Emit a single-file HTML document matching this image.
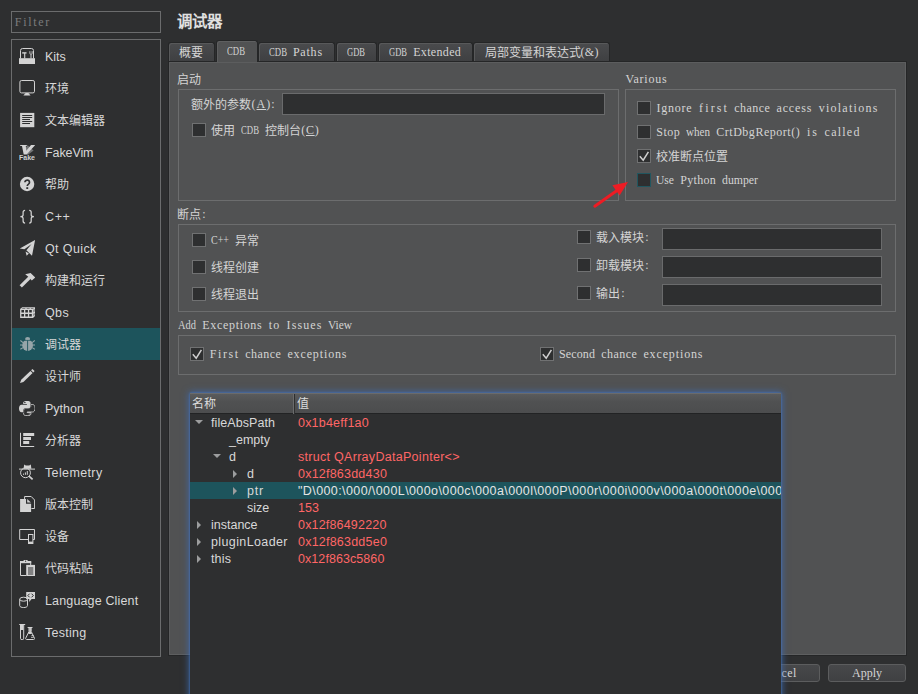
<!DOCTYPE html>
<html lang="zh-CN">
<head>
<meta charset="utf-8">
<title>Options</title>
<style>
*{box-sizing:border-box;margin:0;padding:0}
html,body{width:918px;height:694px;overflow:hidden;background:#2e2f30}
body{position:relative;font-family:"Liberation Sans",sans-serif;font-size:12px;color:#d4d4d4}
.abs{position:absolute}
.m{font-family:"Liberation Serif",serif;font-size:12px;white-space:pre}
.c{font-family:"Liberation Sans",sans-serif;font-size:12px;letter-spacing:0;position:relative;top:1px}
u{text-decoration:underline;text-underline-offset:1px}
#filter{left:11px;top:11px;width:150px;height:22px;border:1px solid #6b6c6d;background:#2e2f30}
#filter .lbl{left:2px;top:3px;color:#7b7c7d}
#list{left:11px;top:39px;width:150px;height:618px;border:1px solid #6b6c6d;background:#2e2f30}
.row{position:absolute;left:0;width:148px;height:32px}
.row.sel{background:#1d545c}
.row svg{position:absolute;left:7px;top:8px;width:16px;height:16px}
.row .t{position:absolute;left:33px;top:1px;line-height:32px;font-size:12.5px;white-space:nowrap;color:#d8d8d8}
.row .t.c{font-size:12px}
#title{left:177px;top:11px;font-size:15.4px;font-weight:bold;line-height:22px;color:#e0e0e0;white-space:nowrap}
.tab{position:absolute;top:42px;height:19px;border:1px solid #252627;border-bottom:none;background:linear-gradient(#4a4b4d,#3f4042);border-radius:3px 3px 0 0;white-space:nowrap;overflow:hidden;box-shadow:inset 1px 1px 0 #58595a}
.tab.on{top:40px;height:22px;background:#515253;z-index:3;box-shadow:inset 1px 1px 0 #5e5f60}
.tab .lbl{top:1.5px}
.tab.on .lbl{top:2.5px}
#pane{left:168px;top:61px;width:739px;height:595px;background:#515253;border:1px solid #252627;box-shadow:inset 1px 1px 0 #5c5d5e,inset -1px -1px 0 #5e5f60}
.gb{position:absolute;border:1px solid #6c6d6e}
.lbl{position:absolute;white-space:nowrap;line-height:14px;height:14px}
.inp{position:absolute;background:#2e2f30;border:1px solid #6a6b6c}
.cb{position:absolute;width:14px;height:14px;background:#2e2f30;border:1px solid #707172}
.cb svg{position:absolute;left:0;top:0;width:12px;height:12px}
.btn{position:absolute;height:18px;border:1px solid #5c5d5e;background:linear-gradient(#47484a,#3f4042);border-radius:3px}
#pop{left:190px;top:393px;width:591px;height:310px;background:#2e2f30;z-index:10;overflow:hidden}
#popglow{left:190px;top:393px;width:591px;height:310px;box-shadow:0 0 2px 0 rgba(70,120,196,.95),0 0 7px 1px rgba(62,110,182,.8);z-index:9}
#pop .hd{position:absolute;left:0;top:0;width:591px;height:21px;background:linear-gradient(#5a5b5c,#505152 40%,#4c4d4e);border-top:1px solid #6a6b6c;border-bottom:1px solid #222324}
#pop .hd span{position:absolute;line-height:14px;top:3px;color:#dcdcdc}
#pop .tr{position:absolute;left:0;width:591px;height:17px;line-height:17px;white-space:nowrap;font-size:12.5px}
#pop .tr.sel{background:#1d545c}
#pop .n{position:absolute;top:1px;color:#d8d8d8}
#pop .v{position:absolute;left:108px;top:1px;color:#ff6666}
#pop .tr.sel .v{color:#e4e4e4}
.ad{position:absolute;width:0;height:0;border-left:4px solid transparent;border-right:4px solid transparent;border-top:4.5px solid #9c9d9e;top:6px;box-sizing:content-box}
.ag{position:absolute;width:0;height:0;border-top:4px solid transparent;border-bottom:4px solid transparent;border-left:4.5px solid #9c9d9e;top:4.5px;box-sizing:content-box}
</style>
</head>
<body>
<div id="filter" class="abs"><div class="lbl"><span class="m"><span style="display:inline-block;width:36px;letter-spacing:1.667px;padding-left:0.833px">Filter</span></span></div></div>
<div id="list" class="abs">
<div class="row" style="top:0px"><svg viewBox="0 0 16 16"><path d="M1.5 10.5V2.6a2.1 2.1 0 0 1 2.1-2.1h8.8a2.1 2.1 0 0 1 2.1 2.1V10.5" fill="none" stroke="#d3d3d3" stroke-width="1"/><rect x="0" y="10.2" width="16" height="5.8" fill="#d3d3d3"/><path d="M3.2 4.9h4.3" fill="none" stroke="#d3d3d3" stroke-width="1.4"/><path d="M5.7 5v5.4" fill="none" stroke="#d3d3d3" stroke-width="1.1"/><path d="M12 6.6v3.8" fill="none" stroke="#d3d3d3" stroke-width="1"/><path d="M10.9 3.2v2.1a1.1 1.1 0 0 0 2.2 0V3.2" fill="none" stroke="#d3d3d3" stroke-width="0.9"/></svg><span class="t">Kits</span></div>
<div class="row" style="top:32px"><svg viewBox="0 0 16 16"><rect x="0.9" y="0.5" width="14.6" height="12.4" rx="1.6" fill="none" stroke="#d3d3d3" stroke-width="1"/><path d="M4.4 15.6 6.6 13.1h2.8l2.2 2.5z" fill="#d3d3d3"/></svg><span class="t c">环境</span></div>
<div class="row" style="top:64px"><svg viewBox="0 0 16 16"><rect x="1.1" y="0.9" width="14.2" height="14.3" fill="#d3d3d3"/><path d="M3.2 3.5h10M3.2 5.5h10M3.2 7.5h7.8M3.2 9.5h10M3.2 11.5h7.8" fill="none" stroke="#2e2f30" stroke-width="1"/></svg><span class="t c">文本编辑器</span></div>
<div class="row" style="top:96px"><svg viewBox="0 0 16 16"><path d="M8.6 1.2 14.6 6.6 8.6 11 4.6 6.6z" fill="#747576"/><path d="M1.2 1.1h6.6v1h-1l.5 4.6L12 1.1h4.1L7.6 10.6H4.7L3 2.1H1.2z" fill="#d3d3d3"/><text x="0" y="15.8" font-family="Liberation Sans" font-weight="bold" font-size="6.4" fill="#d3d3d3" textLength="16" lengthAdjust="spacingAndGlyphs">Fake</text></svg><span class="t" style="letter-spacing:-0.1px">FakeVim</span></div>
<div class="row" style="top:128px"><svg viewBox="0 0 16 16"><circle cx="8.1" cy="8" r="7.2" fill="#d3d3d3"/><path d="M5.9 6.3a2.3 2.2 0 1 1 3.6 1.8c-.9.6-1.2 1-1.2 2" fill="none" stroke="#2e2f30" stroke-width="1.7"/><rect x="7.3" y="11.2" width="1.9" height="1.8" fill="#2e2f30"/></svg><span class="t c">帮助</span></div>
<div class="row" style="top:160px"><svg viewBox="0 0 16 16"><path d="M6.1 2.3C4.6 2.3 4.1 3 4.1 4.3V6.9C4.1 8 3.4 8.5 1.4 8.6 3.4 8.7 4.1 9.2 4.1 10.4V13C4.1 14.3 4.6 15 6.1 15" fill="none" stroke="#d3d3d3" stroke-width="1.25"/><path d="M10.2 2.3C11.7 2.3 12.2 3 12.2 4.3V6.9C12.2 8 12.9 8.5 14.9 8.6 12.900 8.7 12.2 9.2 12.2 10.4V13C12.2 14.3 11.7 15 10.2 15" fill="none" stroke="#d3d3d3" stroke-width="1.25"/></svg><span class="t" style="letter-spacing:0.6px">C++</span></div>
<div class="row" style="top:192px"><svg viewBox="0 0 16 16"><path d="M16.1 0 0.8 8.6 5.4 9.3 12.6 4 7.4 10.2 13 15.8z" fill="#d3d3d3"/><path d="M6.6 11.4 7.6 15.8 9.9 13.5z" fill="#d3d3d3"/></svg><span class="t" style="letter-spacing:0.38px">Qt Quick</span></div>
<div class="row" style="top:224px"><svg viewBox="0 0 16 16"><path d="M0.6 13.3 2.9 15.600 12 6.500 9.700 4.200z" fill="#d3d3d3"/><path d="M6.2 2.3 11.6 0.9 16.3 5.6 12.8 8.6 9.3 4.7z" fill="#d3d3d3"/></svg><span class="t c">构建和运行</span></div>
<div class="row" style="top:256px"><svg viewBox="0 0 16 16"><path d="M1.1 4.9 3.2 3.2H16.1V11.8L14 13.9H1.1z" fill="#d3d3d3"/><path d="M2.4 6h2.6v2.6H2.4zM6.3 6h2.6v2.6H6.3zM10.2 6h2.6v2.6h-2.6zM2.4 9.9h2.6v2.6H2.4zM6.3 9.9h2.6v2.6H6.3zM10.2 9.9h2.6v2.6h-2.6z" fill="#2e2f30"/><path d="M2.6 4.4 3.7 3.9h3L6 4.4zM7.3 4.4 8 3.9h3l-.7.5zM11.5 4.4l.7-.5h2.6l-.7.5zM14.6 5.8l.8-.8v2.6l-.8.8zM14.6 9.7l.8-.8v2.4l-.8.8z" fill="#2e2f30"/></svg><span class="t" style="letter-spacing:0.4px">Qbs</span></div>
<div class="row sel" style="top:288px"><svg viewBox="0 0 16 16"><ellipse cx="8.6" cy="9.3" rx="5.4" ry="5.6" fill="#96a5a9"/><ellipse cx="8.6" cy="2.9" rx="2.5" ry="2" fill="#96a5a9"/><path d="M8.6 4.3V15" stroke="#1d545c" stroke-width="0.9"/><path d="M1.4 4.5 4 6.6M15.8 4.5 13.2 6.6M1 9h2.6M16.2 9h-2.6M1.4 13.3 4 11.6M15.8 13.3 13.2 11.6" fill="none" stroke="#96a5a9" stroke-width="1.1"/><path d="M5.6 4.4h6" stroke="#1d545c" stroke-width="0.7"/></svg><span class="t c">调试器</span></div>
<div class="row" style="top:320px"><svg viewBox="0 0 16 16"><path d="M1 15.1 2.2 11.8 11.4 2.9 13.6 5.1 4.4 14z" fill="#d3d3d3"/><path d="M12.1 2.2 13.4 0.9 15.6 3 14.3 4.4z" fill="#d3d3d3"/></svg><span class="t c">设计师</span></div>
<div class="row" style="top:352px"><svg viewBox="0 0 16 16"><path d="M11.90 13.70 C11.90 15.10 10.70 15.70 8.20 15.70 S4.60 15.10 4.60 13.70 V10.50 C4.60 9.30 5.40 8.50 6.60 8.50 H9.70 C10.90 8.50 11.70 7.70 11.70 6.50 V4.50 H13.50 C15.10 4.50 16.10 6.00 16.10 8.20 S15.10 12.00 13.50 12.00 H8.20 V12.60 H11.90 Z" fill="none" stroke="#d3d3d3" stroke-width="0.9"/><path d="M4.2 3C4.2 1.6 5.4 1 7.9 1S11.5 1.6 11.5 3V6.2C11.5 7.4 10.7 8.200 9.500 8.200H6.400C5.200 8.200 4.400 9 4.400 10.200V12.200H2.600C1 12.200 0 10.700 0 8.500S1 4.700 2.600 4.700H7.900V4.100H4.200Z" fill="#d3d3d3" stroke="#2e2f30" stroke-width="1.3" paint-order="stroke"/><circle cx="5.900" cy="2.600" r=".75" fill="#2e2f30"/><circle cx="10.200" cy="14.100" r=".5" fill="#d3d3d3"/></svg><span class="t">Python</span></div>
<div class="row" style="top:384px"><svg viewBox="0 0 16 16"><path d="M1.500 0.800V14.500H15.200" fill="none" stroke="#d3d3d3" stroke-width="1"/><rect x="4.200" y="1" width="11" height="3" fill="#d3d3d3"/><rect x="4.200" y="5" width="7.800" height="3" fill="#d3d3d3"/><rect x="4.200" y="9" width="6" height="3" fill="#d3d3d3"/></svg><span class="t c">分析器</span></div>
<div class="row" style="top:416px"><svg viewBox="0 0 16 16"><path d="M4.600 4.800 5.200 0.400 6.800 1.400H10.200L11.800 0.400 12.400 4.800z" fill="#d3d3d3"/><path d="M0 5.100H16" fill="none" stroke="#d3d3d3" stroke-width="1"/><circle cx="6.500" cy="8.800" r="4.900" fill="none" stroke="#d3d3d3" stroke-width="1" fill="#2e2f30"/><path d="M10 12.200 13.600 15.400" fill="none" stroke="#d3d3d3" stroke-width="1.7"/><path d="M4.500 10.800V9.600M6.400 10.800V8.400M8.300 10.800V7" fill="none" stroke="#d3d3d3" stroke-width="1"/></svg><span class="t" style="letter-spacing:0.37px">Telemetry</span></div>
<div class="row" style="top:448px"><svg viewBox="0 0 16 16"><path d="M5.6 3.4V0.5H12.2L15.6 4V12.500H12.4" fill="none" stroke="#d3d3d3" stroke-width="1"/><path d="M1.1 3.100H7V7.700H12.100V16H1.100z" fill="#d3d3d3"/><path d="M8.200 3V6.600H11.900z" fill="#d3d3d3"/></svg><span class="t c">版本控制</span></div>
<div class="row" style="top:480px"><svg viewBox="0 0 16 16"><path d="M9 11.500H0.700V1.500H15.500V6" fill="none" stroke="#d3d3d3" stroke-width="1"/><rect x="9.500" y="6.500" width="4.400" height="9" fill="none" stroke="#d3d3d3" stroke-width="1"/><rect x="9.500" y="13.600" width="4.400" height="2" fill="#d3d3d3"/><path d="M14 11.500h1.500V6" fill="none" stroke="#d3d3d3" stroke-width="1"/></svg><span class="t c">设备</span></div>
<div class="row" style="top:512px"><svg viewBox="0 0 16 16"><path d="M1.500 1.500H11.700V5M7 15.500H1.500V1.500" fill="none" stroke="#d3d3d3" stroke-width="1"/><rect x="1" y="1" width="11.200" height="2.200" fill="#d3d3d3"/><rect x="4.600" y="0" width="4" height="1.600" fill="#d3d3d3"/><circle cx="6.600" cy="1.200" r=".6" fill="#2e2f30"/><rect x="7.200" y="4.900" width="8.900" height="11.100" fill="#d3d3d3"/><path d="M9 8h5.300M9 10h5.300M9 12h5.300M9 14h5.300" stroke="#2e2f30" stroke-width="1" fill="none"/></svg><span class="t c">代码粘贴</span></div>
<div class="row" style="top:544px"><svg viewBox="0 0 16 16"><path d="M0.700 7.300V13.600C0.700 16.200 8.500 16.200 8.500 13.600V7.300" fill="none" stroke="#d3d3d3" stroke-width="1"/><ellipse cx="4.600" cy="7.200" rx="3.900" ry="2" fill="none" stroke="#d3d3d3" stroke-width="1"/><path d="M7.200 0H16V6.900H12.600L10.200 10V6.900H7.200z" fill="#d3d3d3"/><path d="M10.600 1.700 8.900 3.500 10.600 5.300M12.600 1.700 14.300 3.500 12.600 5.300" fill="none" stroke="#2e2f30" stroke-width="1"/></svg><span class="t" style="letter-spacing:0.15px">Language Client</span></div>
<div class="row" style="top:576px"><svg viewBox="0 0 16 16"><path d="M0.200 0.500H6.200" fill="none" stroke="#d3d3d3" stroke-width="1"/><path d="M1.500 1V14.200A1.600 1.600 0 0 0 4.700 14.200V1" fill="none" stroke="#d3d3d3" stroke-width="1"/><rect x="2" y="1" width="2.200" height="5" fill="#d3d3d3"/><path d="M8.600 3.500H13.500" fill="none" stroke="#d3d3d3" stroke-width="1"/><path d="M10 4V7.500L6.700 14.200C6.400 15 6.800 15.500 7.600 15.500H14.600C15.400 15.500 15.800 15 15.500 14.200L12.200 7.500V4" fill="none" stroke="#d3d3d3" stroke-width="1"/><path d="M10.300 4h1.600v3.600l1.100 2.300H9.200l1.100-2.300z" fill="#d3d3d3"/><path d="M12.500 11.500h2M12 13.300h2.800" fill="none" stroke="#d3d3d3" stroke-width="0.9"/></svg><span class="t" style="letter-spacing:0.28px">Testing</span></div>
</div>
<div id="title" class="abs">调试器</div>
<div id="pane" class="abs"></div>
<div class="tab" style="left:168px;width:47px"><div class="lbl" style="left:9.5px"><span class="c">概要</span></div></div>
<div class="tab on" style="left:216px;width:42px"><div class="lbl" style="left:9.5px"><span class="m"><span style="display:inline-block;width:18px"><span style="display:inline-block;transform:scaleX(0.7291);transform-origin:0 50%">CDB</span></span></span></div></div>
<div class="tab" style="left:258px;width:77px"><div class="lbl" style="left:9.5px"><span class="m"><span style="display:inline-block;width:18px"><span style="display:inline-block;transform:scaleX(0.7291);transform-origin:0 50%">CDB</span></span><span style="display:inline-block;width:6px"></span><span style="display:inline-block;width:30px;letter-spacing:0.797px;padding-left:0.398px">Paths</span></span></div></div>
<div class="tab" style="left:336px;width:41px"><div class="lbl" style="left:9.5px"><span class="m"><span style="display:inline-block;width:18px"><span style="display:inline-block;transform:scaleX(0.7102);transform-origin:0 50%">GDB</span></span></span></div></div>
<div class="tab" style="left:378px;width:95px"><div class="lbl" style="left:10px"><span class="m"><span style="display:inline-block;width:18px"><span style="display:inline-block;transform:scaleX(0.7102);transform-origin:0 50%">GDB</span></span><span style="display:inline-block;width:6px"></span><span style="display:inline-block;width:48px;letter-spacing:0.334px;padding-left:0.167px">Extended</span></span></div></div>
<div class="tab" style="left:473px;width:137px"><div class="lbl" style="left:10.5px"><span class="c">局部变量和表达式</span><span class="m"><span style="display:inline-block;width:18px;letter-spacing:0.224px;padding-left:0.112px">(&amp;)</span></span></div></div>
<div class="lbl" style="left:177px;top:72px;"><span class="c">启动</span></div>
<div class="gb" style="left:178px;top:89px;width:441px;height:112px"></div>
<div class="lbl" style="left:191px;top:97px;"><span class="c">额外的参数</span><span class="m"><span style="display:inline-block;width:24px;letter-spacing:1.000px;padding-left:0.500px">(<u>A</u>):</span></span></div>
<div class="inp" style="left:282px;top:93px;width:323px;height:22px"></div>
<div class="cb" style="left:192px;top:123px;"></div>
<div class="lbl" style="left:211px;top:123px;"><span class="c">使用</span><span class="m"><span style="display:inline-block;width:6px"></span><span style="display:inline-block;width:18px"><span style="display:inline-block;transform:scaleX(0.7291);transform-origin:0 50%">CDB</span></span><span style="display:inline-block;width:6px"></span></span><span class="c">控制台</span><span class="m"><span style="display:inline-block;width:18px;letter-spacing:0.667px;padding-left:0.333px">(<u>C</u>)</span></span></div>
<div class="lbl" style="left:625px;top:72px;"><span class="m"><span style="display:inline-block;width:42px;letter-spacing:0.761px;padding-left:0.381px">Various</span></span></div>
<div class="gb" style="left:625px;top:89px;width:271px;height:112px"></div>
<div class="cb" style="left:637px;top:101px;"></div>
<div class="lbl" style="left:656px;top:101px;"><span class="m"><span style="display:inline-block;width:36px;letter-spacing:0.779px;padding-left:0.389px">Ignore</span><span style="display:inline-block;width:6px"></span><span style="display:inline-block;width:30px;letter-spacing:2.131px;padding-left:1.066px">first</span><span style="display:inline-block;width:6px"></span><span style="display:inline-block;width:36px;letter-spacing:0.448px;padding-left:0.224px">chance</span><span style="display:inline-block;width:6px"></span><span style="display:inline-block;width:36px;letter-spacing:0.891px;padding-left:0.445px">access</span><span style="display:inline-block;width:6px"></span><span style="display:inline-block;width:60px;letter-spacing:1.266px;padding-left:0.633px">violations</span></span></div>
<div class="cb" style="left:637px;top:125px;"></div>
<div class="lbl" style="left:656px;top:125px;"><span class="m"><span style="display:inline-block;width:24px;letter-spacing:0.496px;padding-left:0.248px">Stop</span><span style="display:inline-block;width:6px"></span><span style="display:inline-block;width:24px"><span style="display:inline-block;transform:scaleX(0.9231);transform-origin:0 50%">when</span></span><span style="display:inline-block;width:6px"></span><span style="display:inline-block;width:84px;letter-spacing:0.525px;padding-left:0.262px">CrtDbgReport()</span><span style="display:inline-block;width:6px"></span><span style="display:inline-block;width:12px;letter-spacing:1.992px;padding-left:0.996px">is</span><span style="display:inline-block;width:6px"></span><span style="display:inline-block;width:36px;letter-spacing:1.224px;padding-left:0.612px">called</span></span></div>
<div class="cb" style="left:637px;top:149px;"><svg viewBox="0 0 12 12"><path d="M1.8 6.3 5.2 10.2 10.4 1.9" fill="none" stroke="#d0d0d0" stroke-width="1.5"/></svg></div>
<div class="lbl" style="left:656px;top:149px;"><span class="c">校准断点位置</span></div>
<div class="cb" style="left:637px;top:173px;border-color:#21565f;"></div>
<div class="lbl" style="left:656px;top:173px;"><span class="m"><span style="display:inline-block;width:18px"><span style="display:inline-block;transform:scaleX(0.9640);transform-origin:0 50%">Use</span></span><span style="display:inline-block;width:6px"></span><span style="display:inline-block;width:36px;letter-spacing:0.331px;padding-left:0.165px">Python</span><span style="display:inline-block;width:6px"></span><span style="display:inline-block;width:36px"><span style="display:inline-block;transform:scaleX(0.9821);transform-origin:0 50%">dumper</span></span></span></div>
<svg class="abs" style="left:585px;top:170px;width:60px;height:45px" viewBox="585 170 60 45"><path d="M594.8 206.2 617 190.5" stroke="#ed1c24" stroke-width="3" stroke-linecap="round" fill="none"/><path d="M628 182 612.4 185.3 619.6 195.6z" fill="#ed1c24"/></svg>
<div class="lbl" style="left:177px;top:207px;"><span class="c">断点</span><span class="m"><span style="display:inline-block;width:6px;letter-spacing:2.656px;padding-left:1.328px">:</span></span></div>
<div class="gb" style="left:178px;top:224px;width:718px;height:88px"></div>
<div class="cb" style="left:192px;top:233px;"></div>
<div class="lbl" style="left:211px;top:233px;"><span class="m"><span style="display:inline-block;width:18px"><span style="display:inline-block;transform:scaleX(0.8354);transform-origin:0 50%">C++</span></span><span style="display:inline-block;width:6px"></span></span><span class="c">异常</span></div>
<div class="cb" style="left:192px;top:260px;"></div>
<div class="lbl" style="left:211px;top:260px;"><span class="c">线程创建</span></div>
<div class="cb" style="left:192px;top:287px;"></div>
<div class="lbl" style="left:211px;top:287px;"><span class="c">线程退出</span></div>
<div class="cb" style="left:577px;top:230px;"></div>
<div class="lbl" style="left:596px;top:230px;"><span class="c">载入模块</span><span class="m"><span style="display:inline-block;width:6px;letter-spacing:2.656px;padding-left:1.328px">:</span></span></div>
<div class="inp" style="left:662px;top:228px;width:220px;height:22px"></div>
<div class="cb" style="left:577px;top:258px;"></div>
<div class="lbl" style="left:596px;top:258px;"><span class="c">卸载模块</span><span class="m"><span style="display:inline-block;width:6px;letter-spacing:2.656px;padding-left:1.328px">:</span></span></div>
<div class="inp" style="left:662px;top:256px;width:220px;height:22px"></div>
<div class="cb" style="left:577px;top:286px;"></div>
<div class="lbl" style="left:596px;top:286px;"><span class="c">输出</span><span class="m"><span style="display:inline-block;width:6px;letter-spacing:2.656px;padding-left:1.328px">:</span></span></div>
<div class="inp" style="left:662px;top:284px;width:220px;height:22px"></div>
<div class="lbl" style="left:178px;top:318px;"><span class="m"><span style="display:inline-block;width:18px"><span style="display:inline-block;transform:scaleX(0.8707);transform-origin:0 50%">Add</span></span><span style="display:inline-block;width:6px"></span><span style="display:inline-block;width:60px;letter-spacing:0.667px;padding-left:0.334px">Exceptions</span><span style="display:inline-block;width:6px"></span><span style="display:inline-block;width:12px;letter-spacing:1.328px;padding-left:0.664px">to</span><span style="display:inline-block;width:6px"></span><span style="display:inline-block;width:36px;letter-spacing:1.109px;padding-left:0.555px">Issues</span><span style="display:inline-block;width:6px"></span><span style="display:inline-block;width:24px"><span style="display:inline-block;transform:scaleX(0.9493);transform-origin:0 50%">View</span></span></span></div>
<div class="gb" style="left:178px;top:335px;width:718px;height:40px"></div>
<div class="cb" style="left:190px;top:347px;"><svg viewBox="0 0 12 12"><path d="M1.8 6.3 5.2 10.2 10.4 1.9" fill="none" stroke="#d0d0d0" stroke-width="1.5"/></svg></div>
<div class="lbl" style="left:209px;top:347px;"><span class="m"><span style="display:inline-block;width:30px;letter-spacing:1.597px;padding-left:0.798px">First</span><span style="display:inline-block;width:6px"></span><span style="display:inline-block;width:36px;letter-spacing:0.448px;padding-left:0.224px">chance</span><span style="display:inline-block;width:6px"></span><span style="display:inline-block;width:60px;letter-spacing:0.867px;padding-left:0.434px">exceptions</span></span></div>
<div class="cb" style="left:540px;top:347px;"><svg viewBox="0 0 12 12"><path d="M1.8 6.3 5.2 10.2 10.4 1.9" fill="none" stroke="#d0d0d0" stroke-width="1.5"/></svg></div>
<div class="lbl" style="left:559px;top:347px;"><span class="m"><span style="display:inline-block;width:36px;letter-spacing:0.112px;padding-left:0.056px">Second</span><span style="display:inline-block;width:6px"></span><span style="display:inline-block;width:36px;letter-spacing:0.448px;padding-left:0.224px">chance</span><span style="display:inline-block;width:6px"></span><span style="display:inline-block;width:60px;letter-spacing:0.867px;padding-left:0.434px">exceptions</span></span></div>
<div class="btn" style="left:744px;top:664px;width:76px"><div class="lbl" style="left:15.5px;top:1px"><span class="m"><span style="display:inline-block;width:36px;letter-spacing:0.445px;padding-left:0.223px">Cancel</span></span></div></div>
<div class="btn" style="left:828px;top:664px;width:78px"><div class="lbl" style="left:23px;top:1px"><span class="m"><span style="display:inline-block;width:30px;letter-spacing:0.000px;padding-left:0.000px">Apply</span></span></div></div>
<div id="popglow" class="abs"></div>
<div id="pop" class="abs">
<div class="hd"><span style="left:2px">名称</span><span style="left:107px">值</span><span style="left:103px;top:0;width:1px;height:20px;background:#6a6b6c"></span><span style="left:104px;top:0;width:1px;height:20px;background:#2e2f30"></span></div>
<div class="tr" style="top:21px"><span class="ad" style="left:5px"></span><span class="n" style="left:21px;letter-spacing:0.08px">fileAbsPath</span><span class="v" style="letter-spacing:0.21px">0x1b4eff1a0</span></div>
<div class="tr" style="top:38px"><span class="n" style="left:39px">_empty</span><span class="v" style="letter-spacing:0px"></span></div>
<div class="tr" style="top:55px"><span class="ad" style="left:23px"></span><span class="n" style="left:39px">d</span><span class="v" style="letter-spacing:0.29px">struct QArrayDataPointer&lt;&gt;</span></div>
<div class="tr" style="top:72px"><span class="ag" style="left:43px"></span><span class="n" style="left:57px">d</span><span class="v" style="letter-spacing:0.22px">0x12f863dd430</span></div>
<div class="tr sel" style="top:89px"><span class="ag" style="left:43px"></span><span class="n" style="left:57px;letter-spacing:0.8px">ptr</span><span class="v" style="letter-spacing:0.4px">"D\000:\000/\000L\000o\000c\000a\000l\000P\000r\000i\000v\000a\000t\000e\000/\000</span></div>
<div class="tr" style="top:106px"><span class="n" style="left:57px">size</span><span class="v" style="letter-spacing:0px">153</span></div>
<div class="tr" style="top:123px"><span class="ag" style="left:7px"></span><span class="n" style="left:21px">instance</span><span class="v" style="letter-spacing:0.18px">0x12f86492220</span></div>
<div class="tr" style="top:140px"><span class="ag" style="left:7px"></span><span class="n" style="left:21px;letter-spacing:0.38px">pluginLoader</span><span class="v" style="letter-spacing:0.22px">0x12f863dd5e0</span></div>
<div class="tr" style="top:157px"><span class="ag" style="left:7px"></span><span class="n" style="left:21px;letter-spacing:0.15px">this</span><span class="v" style="letter-spacing:0.07px">0x12f863c5860</span></div>
</div>
</body>
</html>
